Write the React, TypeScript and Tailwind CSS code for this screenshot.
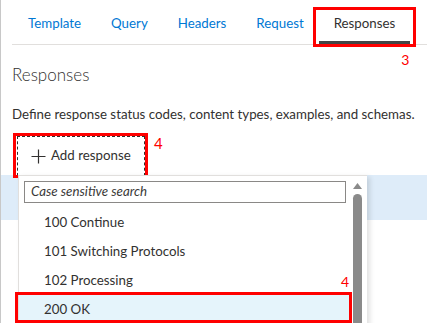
import React from "react";

const tabs = ["Template", "Query", "Headers", "Request", "Responses"];
const options = ["100 Continue", "101 Switching Protocols", "102 Processing", "200 OK"];

const App = () => {
	const activeTab = "Responses";
	const selected = "200 OK";

	return (
		<div
			className="relative w-[427px] h-[323px] overflow-hidden bg-white border-l border-[#c8c8c8] text-[#323130] text-[13.3px]"
			style={{ fontFamily: 'Lato, "Noto Sans", sans-serif' }}
		>
			{/* Tab strip */}
			<div className="ml-[11px] pl-[1px] flex h-[45px] border-b border-[#e1dfdd]">
				{tabs.map((t) => (
					<div key={t} className="relative flex items-center px-[15px] pt-[3px]">
						<span className={t === activeTab ? "text-[#323130]" : "text-[#0078d4]"}>{t}</span>
						{t === activeTab && (
							<>
								<div className="absolute left-0 right-0 bottom-0 h-[3px] bg-[#444444]" />
								<div className="absolute -left-[6px] -right-[6px] top-[7px] -bottom-[3px] border-[3px] border-[#f00]" />
								<span className="absolute right-[1px] top-[52px] text-[14px] leading-[16px] text-[#f00]">3</span>
							</>
						)}
					</div>
				))}
			</div>

			{/* Section */}
			<div className="pl-[11px] pt-[18px]">
				<h2 className="text-[17px] font-light leading-[24px]">Responses</h2>
				<p className="mt-[17px] leading-[20px] whitespace-nowrap">
					Define response status codes, content types, examples, and schemas.
				</p>
				<div className="relative mt-[12px] ml-[5px] flex">
					<button className="flex h-[40px] w-[128px] items-center gap-[5px] border border-dashed border-[#323130] pl-[13px] whitespace-nowrap">
						<svg width="15" height="15" viewBox="0 0 15 15">
							<path d="M7.5 0.5v14M0.5 7.5h14" stroke="#323130" strokeWidth="1.2" fill="none" />
						</svg>
						Add response
					</button>
					<div className="absolute -left-[4px] -top-[3px] w-[135px] h-[45px] border-[3px] border-[#f00]" />
					<span className="ml-[9px] -mt-[1px] text-[15px] leading-[16px] text-[#f00]">4</span>

					{/* Dropdown menu */}
					<div className="absolute left-[1px] top-[39px] z-10 w-[349px] h-[160px] bg-white border-l border-t border-[#e1dfdd] shadow-[3px_2px_5px_rgba(0,0,0,0.12)] flex">
						<div className="flex-1 pl-[5px] pt-[5px]">
							<div className="h-[22px] w-[322px] border border-[#8a8886] flex items-center pl-[6px] italic text-[#3b3a39]">
								Case sensitive search
							</div>
							<div className="mt-[5px] -ml-[5px]">
								{options.map((o) => (
									<div
										key={o}
										className={`relative h-[29px] flex items-center pl-[25px] ${o === selected ? "bg-[#e5f4fb]" : ""}`}
									>
										{o}
										{o === selected && (
											<>
												<div className="absolute -left-[4px] right-[-1px] -top-[3px] bottom-[1px] border-[3px] border-[#f00]" />
												<span className="absolute right-[2px] -top-[21px] text-[14px] leading-[16px] text-[#f00]">4</span>
											</>
										)}
									</div>
								))}
							</div>
						</div>
						<div className="w-[13px] mr-[3px] flex flex-col items-center pt-[7px]">
							<svg width="9" height="6" viewBox="0 0 9 6">
								<path d="M4.5 0L9 6H0z" fill="#8a8a8a" />
							</svg>
							<div className="mt-[5px] w-[9px] flex-1 rounded-t-full bg-[#8a8a8a]" />
						</div>
					</div>
				</div>
			</div>

			{/* Light blue row behind the dropdown */}
			<div className="mt-[-1px] h-[45px] bg-[#deecf9]" />
		</div>
	);
};

export default App;
